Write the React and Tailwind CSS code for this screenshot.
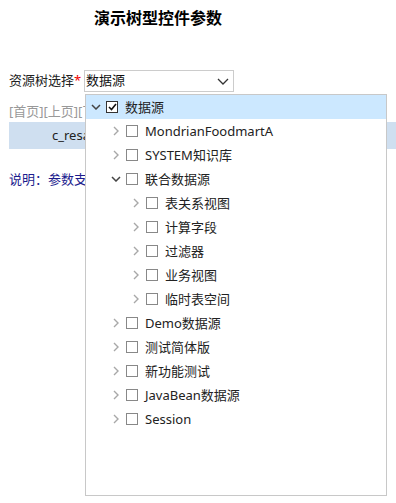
import React from "react";

const font = { fontFamily: '"Noto Sans", "Noto Sans CJK SC", sans-serif' };

const treeRows = [
  { label: "数据源", level: 0, open: true, checked: true, active: true },
  { label: "MondrianFoodmartA", level: 1 },
  { label: "SYSTEM知识库", level: 1 },
  { label: "联合数据源", level: 1, open: true },
  { label: "表关系视图", level: 2 },
  { label: "计算字段", level: 2 },
  { label: "过滤器", level: 2 },
  { label: "业务视图", level: 2 },
  { label: "临时表空间", level: 2 },
  { label: "Demo数据源", level: 1 },
  { label: "测试简体版", level: 1 },
  { label: "新功能测试", level: 1 },
  { label: "JavaBean数据源", level: 1 },
  { label: "Session", level: 1 },
];

const Chevron = ({ open }) =>
  open ? (
    <svg width="10" height="6" viewBox="0 0 10 6" fill="none">
      <path d="M1 1l4 4 4-4" stroke="#444" strokeWidth="1.5" />
    </svg>
  ) : (
    <svg width="6" height="10" viewBox="0 0 6 10" fill="none">
      <path d="M1 1l4 4-4 4" stroke="#a8a8a8" strokeWidth="1.4" />
    </svg>
  );

const Checkbox = ({ checked }) => (
  <span
    className={`flex h-[12px] w-[12px] items-center justify-center border bg-white ${
      checked ? "border-[#333]" : "border-[#888]"
    }`}
  >
    {checked && (
      <svg width="9" height="8" viewBox="0 0 9 8" fill="none">
        <path d="M1 4l2.5 2.5L8 1" stroke="#111" strokeWidth="1.6" />
      </svg>
    )}
  </span>
);

const TreeRow = ({ label, level, open, checked, active }) => (
  <div
    className={`flex h-6 items-center text-[13px] text-[#222] ${
      active ? "bg-[#cce8ff]" : ""
    }`}
    style={{ paddingLeft: level * 20 + 2 }}
  >
    <span className="flex w-[16px] items-center justify-center">
      <Chevron open={open} />
    </span>
    <span className="ml-[2px]">
      <Checkbox checked={checked} />
    </span>
    <span className="ml-[7px] whitespace-nowrap leading-none">{label}</span>
  </div>
);

export default function App() {
  return (
    <div className="relative h-[503px] w-[396px] overflow-hidden bg-white" style={font}>
      {/* title */}
      <div className="w-[316px] pt-[6px] text-center text-[16px] font-bold leading-[24px] text-black">
        演示树型控件参数
      </div>

      {/* select row */}
      <div className="mt-[40px] flex items-center pl-[9px]">
        <span className="w-[75px] whitespace-nowrap text-[13px] text-[#222]">
          资源树选择<span className="text-[#e00]">*</span>
        </span>
        <div className="flex h-[22px] w-[150px] items-center justify-between border border-[#ccc] pl-[1px] pr-[4px] text-[13px] text-[#111]">
          <span>数据源</span>
          <svg width="12" height="7" viewBox="0 0 12 7" fill="none">
            <path d="M1 1l5 5 5-5" stroke="#333" strokeWidth="1.3" />
          </svg>
        </div>
      </div>

      {/* content behind the dropdown, clipped at its left edge */}
      <div className="mt-[9px] ml-[9px] w-[76px] overflow-hidden whitespace-nowrap text-[13px] leading-[20px] text-[#999]">
        [首页][上页][下
      </div>
      <div className="ml-[9px] mt-[1px] flex h-[27px] items-center bg-[#cfdff0] pl-[43px] text-[13px] text-[#222]">
        <span className="w-[33px] overflow-hidden whitespace-nowrap">c_resa</span>
      </div>
      <div
        className="mt-[20px] ml-[9px] w-[76px] overflow-hidden whitespace-nowrap text-[13px] leading-[20px] text-[#1c1c8e]"
        style={{ fontFamily: '"Noto Sans CJK SC", sans-serif' }}
      >
        说明：参数支
      </div>

      {/* dropdown tree */}
      <div className="absolute left-[85px] top-[94px] h-[402px] w-[302px] border border-[#c8c8c8] bg-white">
        {treeRows.map((row) => (
          <TreeRow key={row.label} {...row} />
        ))}
      </div>
    </div>
  );
}
